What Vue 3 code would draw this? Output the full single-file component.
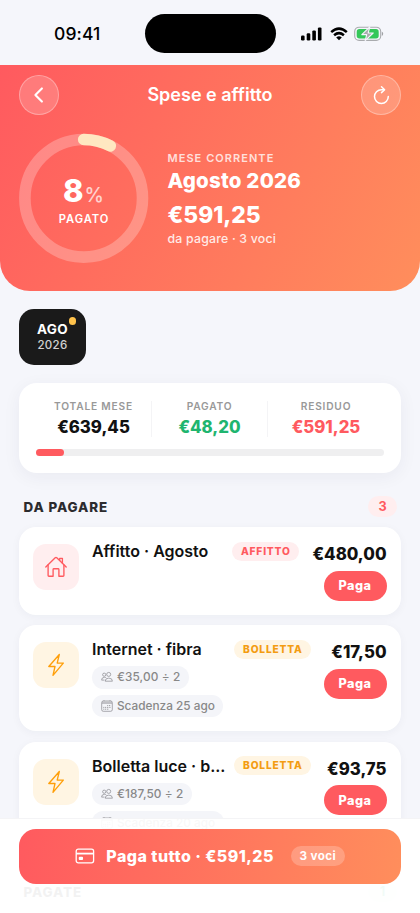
<script setup>
const totals = [
  { label: 'TOTALE MESE', value: '€639,45', tone: 'ink' },
  { label: 'PAGATO', value: '€48,20', tone: 'green' },
  { label: 'RESIDUO', value: '€591,25', tone: 'red' },
]
const items = [
  { title: 'Affitto · Agosto', kind: 'rent', tag: 'AFFITTO', amount: '€480,00' },
  { title: 'Internet · fibra', kind: 'bill', tag: 'BOLLETTA', amount: '€17,50', split: '€35,00 ÷ 2', due: 'Scadenza 25 ago' },
  { title: 'Bolletta luce · b...', kind: 'bill', tag: 'BOLLETTA', amount: '€93,75', split: '€187,50 ÷ 2', due: 'Scadenza 20 ago' },
]
const paidPercent = 8
</script>

<template>
  <div class="screen">
    <div class="status">
      <span class="clock">09:41</span>
      <div class="island"></div>
      <div class="indicators">
        <svg class="signal" width="21" height="14" viewBox="0 0 21 14">
          <rect x="0" y="8.6" width="3.6" height="4.8" rx="1.2" />
          <rect x="5.7" y="6.2" width="3.6" height="7.2" rx="1.2" />
          <rect x="11.3" y="3.4" width="3.6" height="10" rx="1.2" />
          <rect x="16.9" y="0.4" width="3.6" height="13" rx="1.2" />
        </svg>
        <svg class="wifi" width="18" height="14" viewBox="0 0 18 14" fill="none" stroke="#000" stroke-width="2.5">
          <path d="M1.2 5.1Q9 -1.8 16.8 5.1" />
          <path d="M4.1 8.2Q9 4 13.9 8.2" />
          <path d="M6.2 10.4Q9 8.2 11.8 10.4L9 13.3Z" fill="#000" stroke="none" />
        </svg>
        <svg class="battery" width="30" height="16" viewBox="0 0 30 16">
          <rect x=".7" y="1.2" width="26" height="13.2" rx="4.4" fill="none" stroke="#a9abae" stroke-width="1.1" />
          <rect x="2.7" y="3.1" width="22" height="9.4" rx="2.7" fill="#34c759" />
          <path d="M27.9 5.7Q29.2 6.4 29.2 7.8T27.9 9.9Z" fill="#a0a2a5" />
          <path d="M15.8.9 7.8 8.6h4.9L11.2 14.7 19.2 7h-5Z" fill="#a9abae" stroke="#f5f6fb" stroke-width="1.1" stroke-linejoin="round" />
        </svg>
      </div>
    </div>

    <header class="hero">
      <nav class="nav">
        <button class="round">
          <svg width="20" height="20" viewBox="0 0 20 20" fill="none" stroke="#fff" stroke-width="2.1" stroke-linecap="round" stroke-linejoin="round"><path d="M12.9 3.4 6.4 10 12.9 16.6" /></svg>
        </button>
        <h1>Spese e affitto</h1>
        <button class="round">
          <svg width="20" height="20" viewBox="0 0 20 20" fill="none" stroke="#fff" stroke-width="1.5" stroke-linecap="round" stroke-linejoin="round"><path d="M17.3 11.6A6.9 6.9 0 1 1 10.4 4.7H13" /><path d="M10.5 1.8 13.6 4.7 10.5 7.6" /></svg>
        </button>
      </nav>
      <div class="overview">
        <div class="ring">
          <svg width="130" height="130" viewBox="0 0 130 130" fill="none" stroke-width="11.6">
            <circle cx="64.7" cy="65.3" r="58.8" stroke="#fff" stroke-opacity=".25" />
            <circle cx="64.7" cy="65.3" r="58.8" stroke="#ffe8c1" stroke-linecap="round" pathLength="100" :stroke-dasharray="`${paidPercent - 0.5} 100`" transform="rotate(-90 64.7 65.3)" />
          </svg>
          <div class="ring-label">
            <div class="percent">{{ paidPercent }}<span>%</span></div>
            <div class="paid">PAGATO</div>
          </div>
        </div>
        <div class="month">
          <div class="eyebrow">MESE CORRENTE</div>
          <div class="month-name">Agosto 2026</div>
          <div class="due-total">€591,25</div>
          <div class="due-note">da pagare · 3 voci</div>
        </div>
      </div>
    </header>

    <main class="content">
      <div class="chip">
        <b>AGO</b>
        <span>2026</span>
        <i></i>
      </div>

      <section class="summary">
        <div class="totals">
          <div v-for="t in totals" :key="t.label" class="total">
            <span>{{ t.label }}</span>
            <b :class="t.tone">{{ t.value }}</b>
          </div>
        </div>
        <div class="track"><div class="fill" :style="{ width: paidPercent + '%' }"></div></div>
      </section>

      <div class="section-head">
        <h2>DA PAGARE</h2>
        <span class="count">3</span>
      </div>

      <div class="list">
        <article v-for="item in items" :key="item.title" class="item" :class="item.kind">
          <div class="tile">
            <svg v-if="item.kind === 'rent'" width="24" height="24" viewBox="0 0 24 24" fill="none" stroke="#ff5a5f" stroke-width="1.35" stroke-linecap="round" stroke-linejoin="round">
              <path d="M1.8 12 11.2 2.8Q12 2.1 12.8 2.8L22.2 12" /><path d="M4.1 10V20.4Q4.1 21.2 4.9 21.2H9.1V14.5Q9.1 13.7 9.9 13.7H14.1Q14.9 13.7 14.9 14.5V21.2H19.1Q19.9 21.2 19.9 20.4V10" /><path d="M15.7 5.3V3.3H18.4V8" />
            </svg>
            <svg v-else width="24" height="24" viewBox="0 0 24 24" fill="none" stroke="#ff9f0a" stroke-width="1.35" stroke-linejoin="round"><path d="M15.3 1.5 4.8 13.5H11L9 22.4 19.3 10.1H13.2Z" /></svg>
          </div>
          <div class="details">
            <div class="title-row">
              <h3>{{ item.title }}</h3>
              <span class="tag">{{ item.tag }}</span>
            </div>
            <div v-if="item.split" class="pill split">
              <svg width="12" height="12" viewBox="0 0 12 12" fill="none" stroke="#8e8e93" stroke-width=".75" stroke-linejoin="round">
                <circle cx="7.7" cy="3.4" r="2" /><path d="M4.2 10.2Q4.2 7.1 7.8 7.1T11.4 10.2Z" /><circle cx="3.2" cy="3.7" r="1.6" /><path d="M3.5 9.1H.6Q.5 6.4 3.4 6.3Q4.5 6.3 5.2 6.8" />
              </svg>
              {{ item.split }}
            </div>
            <div v-if="item.due" class="pill due">
              <svg width="12" height="12" viewBox="0 0 12 12" fill="none" stroke="#8e8e93" stroke-width=".75">
                <rect x=".7" y="1" width="10.6" height="10.3" rx="1.6" /><path d="M1 2.4H11M1 3.5H11" stroke-width="1.1" opacity=".5" /><path d="M3 .2V1.2M9 .2V1.2" /><path d="M6.2 5.6H10M2.3 7.4H10M2.3 9.2H8" stroke-dasharray="1 .8" stroke-width=".9" />
              </svg>
              {{ item.due }}
            </div>
          </div>
          <div class="side">
            <b>{{ item.amount }}</b>
            <button>Paga</button>
          </div>
        </article>
      </div>

      <div class="section-head paid-head">
        <h2>PAGATE</h2>
        <span class="count done">1</span>
      </div>
    </main>

    <footer class="dock">
      <button class="pay-all">
        <svg width="20" height="20" viewBox="0 0 20 20" fill="none" stroke="#fff" stroke-width="1.3"><rect x="1.2" y="3.2" width="17.4" height="13.6" rx="2.1" /><path d="M1.2 7.6H18.6" stroke-width="1.8" /><rect x="4.4" y="11.4" width="3" height="2" rx=".3" fill="#fff" /></svg>
        <span class="pay-label">Paga tutto · €591,25</span>
        <span class="pay-count">3 voci</span>
      </button>
    </footer>
  </div>
</template>

<style>
body { margin: 0; overflow: hidden; }
</style>

<style scoped>
* { box-sizing: border-box; }
h1, h2, h3 { margin: 0; }
button { border: 0; padding: 0; font-family: inherit; color: #fff; }
svg { display: block; flex: none; }
.screen { position: relative; width: 420px; height: 913px; overflow: hidden; background: #f5f6fb; font-family: Inter, "Liberation Sans", sans-serif; color: #111; white-space: nowrap; }
.status { height: 64.5px; display: grid; grid-template-columns: 1fr 131px 1fr; align-items: start; }
.clock { font-size: 17.5px; line-height: 22px; font-weight: 500; color: #000; padding: 23px 0 0 54px; letter-spacing: .1px; }
.island { margin-top: 14px; height: 38.5px; border-radius: 20px; background: #000; }
.indicators { display: flex; align-items: center; gap: 8px; padding: 26px 0 0 25.5px; }
.wifi { margin-right: -2px; }
.hero { height: 226px; padding: 10.5px 19px 0; border-radius: 0 0 30px 30px; background: linear-gradient(118deg, #ff5a5f, #ff8e5c); color: #fff; }
.nav { display: flex; align-items: center; justify-content: space-between; }
.round { width: 40px; height: 40px; border-radius: 50%; background: rgba(255,255,255,.18); border: 1px solid rgba(255,255,255,.3); display: grid; place-items: center; }
h1 { font-size: 18px; line-height: 22px; font-weight: 600; margin-top: -1px; }
.overview { display: flex; gap: 18.5px; margin-top: 18px; }
.ring { display: grid; width: 130px; height: 130px; }
.ring > * { grid-area: 1 / 1; }
.ring-label { text-align: center; padding-top: 39px; }
.percent { font-size: 31px; line-height: 37px; font-weight: 800; margin-left: -1px; }
.percent span { font-size: 19.5px; font-weight: 500; opacity: .7; margin-left: 1px; }
.paid { font-size: 11.2px; line-height: 14px; font-weight: 600; letter-spacing: .9px; margin-top: -2.5px; }
.month { padding-top: 17.5px; }
.eyebrow { font-size: 11px; line-height: 14px; font-weight: 600; letter-spacing: 1.05px; opacity: .78; }
.month-name { font-size: 20.5px; line-height: 24px; font-weight: 800; letter-spacing: .2px; margin-top: 4.5px; }
.due-total { font-size: 22.8px; line-height: 28px; font-weight: 800; margin-top: 8px; }
.due-note { font-size: 12.3px; line-height: 15px; font-weight: 500; opacity: .85; margin-top: 2px; letter-spacing: .22px; }
.content { padding: 18.8px 19px 0; }
.chip { position: relative; width: 67px; height: 55.5px; border-radius: 15px; background: #1a1a1a; color: #fff; display: flex; flex-direction: column; align-items: center; padding-top: 12px; }
.chip b { font-size: 13.5px; line-height: 17px; font-weight: 700; letter-spacing: .3px; }
.chip span { font-size: 11.5px; line-height: 15px; font-weight: 500; opacity: .8; letter-spacing: .3px; }
.chip i { position: absolute; right: 10px; top: 8px; width: 7.5px; height: 7.5px; border-radius: 50%; background: #ffc24b; }
.summary { height: 89.5px; margin-top: 18.7px; border-radius: 18px; background: #fff; padding: 18px 17px 0; box-shadow: 0 4px 18px rgba(30,35,70,.055); }
.totals { display: grid; grid-template-columns: repeat(3, 1fr); height: 34px; }
.total { display: flex; flex-direction: column; align-items: center; border-right: 1px solid #f4f4f6; }
.total:last-child { border-right: 0; }
.total span { font-size: 10.2px; line-height: 12px; font-weight: 600; letter-spacing: .8px; color: #999; margin-top: -1px; }
.total b { font-size: 16.8px; line-height: 20px; font-weight: 800; margin-top: 5px; }
.ink { color: #111; }
.green { color: #1fb56f; }
.red { color: #ff5a5f; }
.track { height: 6.5px; border-radius: 4px; background: #efeff0; margin-top: 14px; }
.fill { height: 100%; border-radius: 4px; background: #ff5a5f; }
.section-head { display: flex; justify-content: space-between; align-items: center; height: 22px; margin-top: 22.7px; padding: 0 4px 0 4.5px; }
h2 { font-size: 13.4px; line-height: 18px; font-weight: 800; letter-spacing: .9px; color: #2b2b2e; }
.count { width: 29px; height: 21.5px; border-radius: 11px; background: #ffeeef; color: #ff5a5f; font-size: 12.7px; line-height: 21.5px; font-weight: 700; text-align: center; }
.done { background: #e6f7ef; color: #1fb56f; }
.list { display: flex; flex-direction: column; gap: 10.5px; margin-top: 9.4px; }
.item { height: 106.3px; border-radius: 17px; background: #fff; box-shadow: 0 2px 10px rgba(30,35,70,.045); padding: 14px 14.5px 0; display: flex; }
.item.rent { height: 87.5px; }
.tile { width: 46px; height: 46px; margin-top: 3px; margin-left: -.5px; border-radius: 13px; background: #fff5e3; display: grid; place-items: center; flex: none; }
.rent .tile { background: #ffeeef; }
.details { flex: 1; min-width: 0; margin-left: 13px; }
.title-row { display: flex; align-items: center; justify-content: space-between; height: 20px; }
h3 { font-size: 16px; line-height: 20px; font-weight: 600; }
.tag { height: 19px; border-radius: 10px; padding: 0 8.4px 0 9px; background: #fff5e3; color: #f39c12; font-size: 10.2px; line-height: 19px; font-weight: 800; letter-spacing: .8px; }
.rent .tag { background: #ffeeef; color: #ff5a5f; }
.pill { width: fit-content; height: 22.5px; border-radius: 12px; background: #f4f5f9; color: #888; display: flex; align-items: center; gap: 4.5px; padding: 0 8.5px; font-size: 11.8px; font-weight: 500; margin-top: 6px; letter-spacing: 0; }
.split { margin-top: 7px; letter-spacing: .1px; }
.side { margin-left: 10.5px; min-width: 65px; display: flex; flex-direction: column; align-items: flex-end; padding-top: 3px; flex: none; }
.rent .side { margin-left: 13.5px; }
.side b { font-size: 16.8px; line-height: 20px; font-weight: 800; }
.side button { width: 63px; height: 30px; border-radius: 15px; margin-top: 6.5px; background: #ff5a5f; font-size: 12.7px; font-weight: 800; letter-spacing: .5px; }
.paid-head { margin-top: 32.5px; }
.dock { position: absolute; left: 0; right: 0; bottom: 0; height: 95px; padding: 9.5px 19px 0; background: rgba(255,255,255,.94); border-top: 1px solid #f4f4f6; }
.pay-all { width: 100%; height: 55px; border-radius: 17px; background: linear-gradient(98deg, #ff5a5f, #ff8e5c); display: flex; align-items: center; justify-content: center; }
.pay-label { font-size: 16px; font-weight: 800; letter-spacing: .46px; margin-left: 11px; }
.pay-count { margin-left: 17px; height: 20px; padding: 0 8.5px; border-radius: 10px; background: rgba(255,255,255,.22); font-size: 11.7px; line-height: 20px; font-weight: 700; letter-spacing: .4px; }
</style>
